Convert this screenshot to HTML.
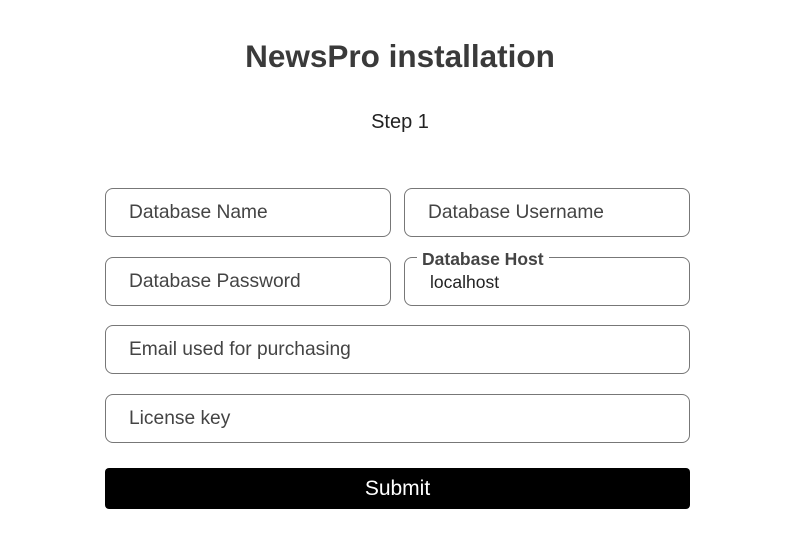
<!DOCTYPE html>
<html><head><style>
body{margin:0;width:800px;height:555px;background:#fff;font-family:"Liberation Sans",sans-serif;position:relative;overflow:hidden}
h1{position:absolute;top:36px;left:0;width:800px;margin:0;text-align:center;font-size:31.5px;font-weight:bold;color:#3a3a3a;line-height:40px}
.step{position:absolute;top:110px;left:0;width:800px;text-align:center;font-size:20px;color:#222;line-height:24px}
.f{position:absolute;box-sizing:border-box;border:1px solid #777;border-radius:8px;height:49px;font-size:19.2px;color:#444;padding-left:23px;line-height:47px}
.lg{position:absolute;top:-9px;left:12px;background:#fff;padding:0 5px;font-size:17.5px;line-height:20px;color:#444;font-weight:bold}
.btn{position:absolute;left:105px;top:468px;width:585px;height:41px;background:#000;border-radius:4px;color:#fff;font-size:21px;text-align:center;line-height:41px}
</style></head><body>
<h1>NewsPro installation</h1>
<div class="step">Step 1</div>
<div class="f" style="left:105px;top:188px;width:286px">Database Name</div>
<div class="f" style="left:404px;top:188px;width:286px">Database Username</div>
<div class="f" style="left:105px;top:257px;width:286px">Database Password</div>
<div class="f" style="left:404px;top:257px;width:286px;padding-left:25px;font-size:17.5px;line-height:49px;color:#222"><span class="lg">Database Host</span>localhost</div>
<div class="f" style="left:105px;top:325px;width:585px">Email used for purchasing</div>
<div class="f" style="left:105px;top:394px;width:585px">License key</div>
<div class="btn">Submit</div>
</body></html>
